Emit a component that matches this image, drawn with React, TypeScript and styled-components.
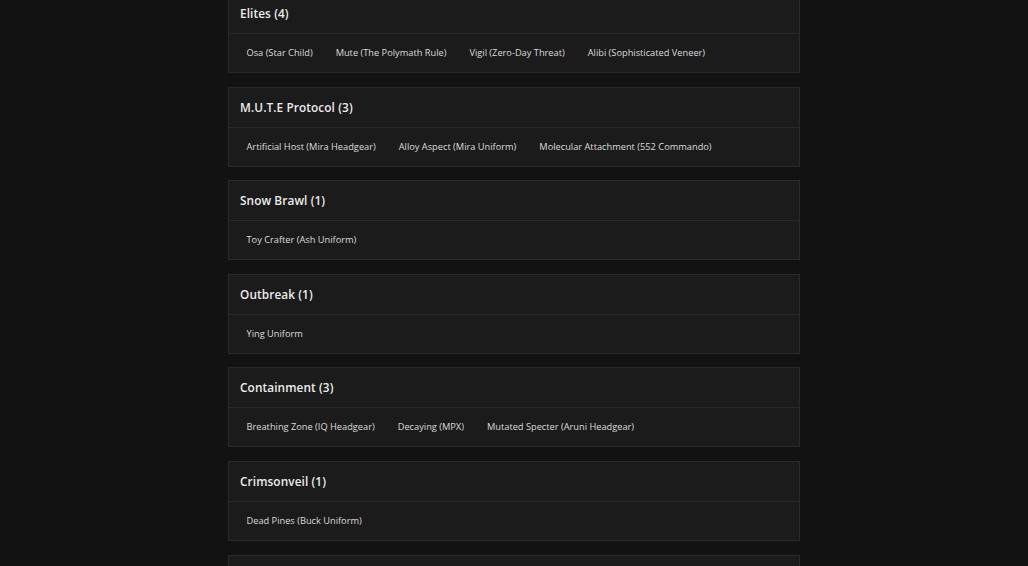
import styled, { createGlobalStyle } from "styled-components";

const GlobalStyle = createGlobalStyle`
  html, body {
    margin: 0;
    padding: 0;
    background: #121212;
    overflow: hidden;
  }
  body {
    font-family: "Open Sans", "Liberation Sans", sans-serif;
    color: #e6e6e6;
  }
`;

const Page = styled.main`
  height: 566px;
  overflow: hidden;
`;

const List = styled.div`
  width: 572px;
  margin: -7px auto 0;
  display: flex;
  flex-direction: column;
  gap: 13.6px;
`;

const Card = styled.section`
  background: #1b1b1b;
  border: 1px solid #2a2a2a;
`;

const Header = styled.h2`
  margin: 0;
  height: 40px;
  box-sizing: border-box;
  display: flex;
  align-items: center;
  padding: 0 11px 1px;
  border-bottom: 1px solid #2a2a2a;
  font-size: 11.8px;
  font-weight: 600;
  letter-spacing: 0.1px;
  color: #ececec;
`;

const Items = styled.ul`
  margin: 0;
  list-style: none;
  height: 38px;
  box-sizing: border-box;
  display: flex;
  align-items: center;
  padding: 0 6px 1px;
`;

const Item = styled.li`
  padding: 0 11.5px;
  font-size: 9.25px;
  font-weight: 500;
  color: #dcdcdc;
  white-space: nowrap;
`;

const groups = [
  {
    name: "Elites",
    items: [
      "Osa (Star Child)",
      "Mute (The Polymath Rule)",
      "Vigil (Zero-Day Threat)",
      "Alibi (Sophisticated Veneer)",
    ],
  },
  {
    name: "M.U.T.E Protocol",
    items: [
      "Artificial Host (Mira Headgear)",
      "Alloy Aspect (Mira Uniform)",
      "Molecular Attachment (552 Commando)",
    ],
  },
  { name: "Snow Brawl", items: ["Toy Crafter (Ash Uniform)"] },
  { name: "Outbreak", items: ["Ying Uniform"] },
  {
    name: "Containment",
    items: [
      "Breathing Zone (IQ Headgear)",
      "Decaying (MPX)",
      "Mutated Specter (Aruni Headgear)",
    ],
  },
  { name: "Crimsonveil", items: ["Dead Pines (Buck Uniform)"] },
];

const App = () => {
  return (
    <>
      <GlobalStyle />
      <Page>
        <List>
          {groups.map((group) => (
            <Card key={group.name}>
              <Header>
                {group.name} ({group.items.length})
              </Header>
              <Items>
                {group.items.map((item) => (
                  <Item key={item}>{item}</Item>
                ))}
              </Items>
            </Card>
          ))}
          {/* next group starts just below the fold */}
          <Card>
            <Header aria-hidden="true" />
          </Card>
        </List>
      </Page>
    </>
  );
};

export default App;
